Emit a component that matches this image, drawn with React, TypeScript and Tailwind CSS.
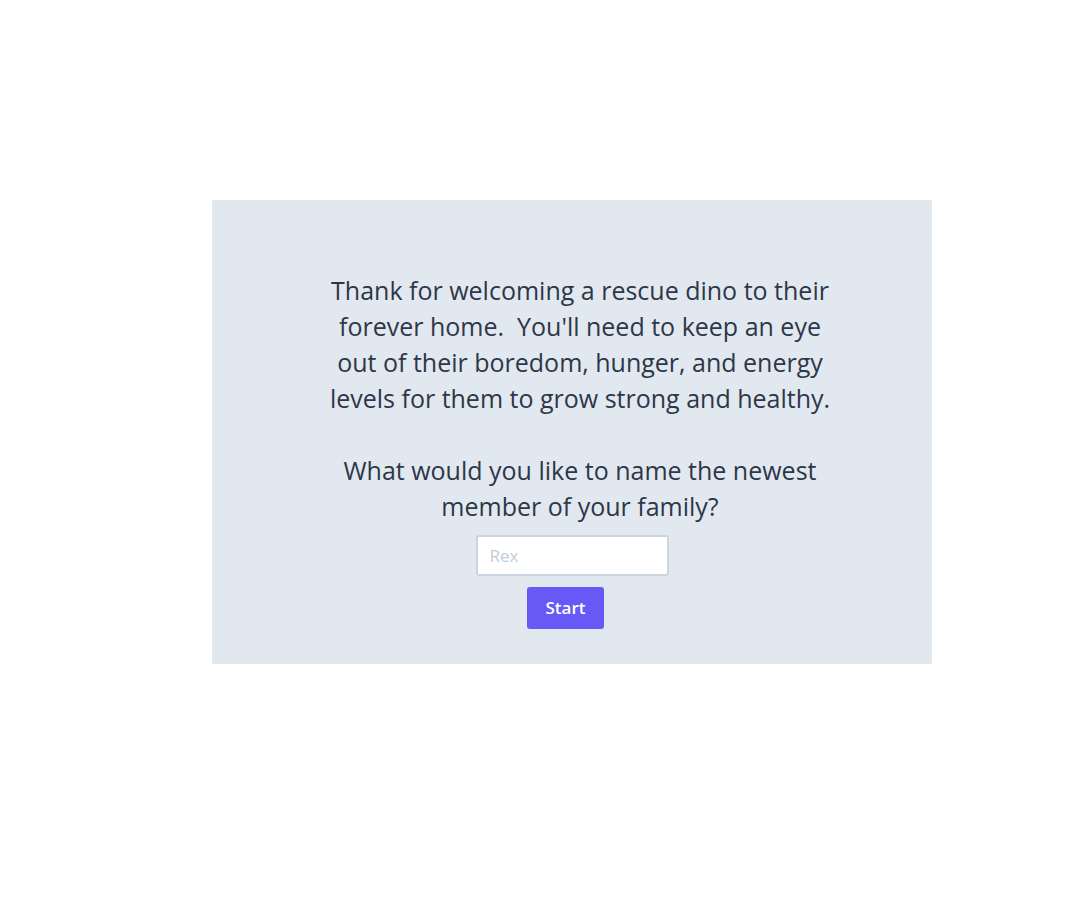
import { useState } from 'react'

const intro = [
  'Thank for welcoming a rescue dino to their',
  "forever home.\u00a0 You'll need to keep an eye",
  'out of their boredom, hunger, and energy',
  'levels for them to grow strong and healthy.',
]

const question = ['What would you like to name the newest', 'member of your family?']

export default function App() {
  const [name, setName] = useState('')
  return (
    <div className="min-h-[924px] w-[1080px] bg-white pt-[200px] pl-[212px] font-['Open_Sans',sans-serif]">
      <div className="w-[720px] h-[464px] bg-[#e2e8f0] pt-[72px] flex flex-col items-center">
        <div className="ml-[16px] text-center text-[25px] leading-[36px] text-[#2d3748] whitespace-nowrap">
          {intro.map(l => <p key={l}>{l}</p>)}
          <p className="mt-[36px]">{question[0]}</p>
          <p>{question[1]}</p>
        </div>
        <input
          value={name}
          onChange={e => setName(e.target.value)}
          placeholder="Rex"
          className="mt-[11px] w-[193px] h-[41px] rounded-[3px] border-2 border-[#cbd5e0] bg-white px-3 text-[17px] text-[#2d3748] placeholder:text-[#c3ccd8] outline-none"
        />
        <button className="mt-[11px] mr-[13px] w-[77px] h-[42px] rounded-[3px] bg-[#6659f6] text-white text-[17px] font-semibold">
          Start
        </button>
      </div>
    </div>
  )
}
